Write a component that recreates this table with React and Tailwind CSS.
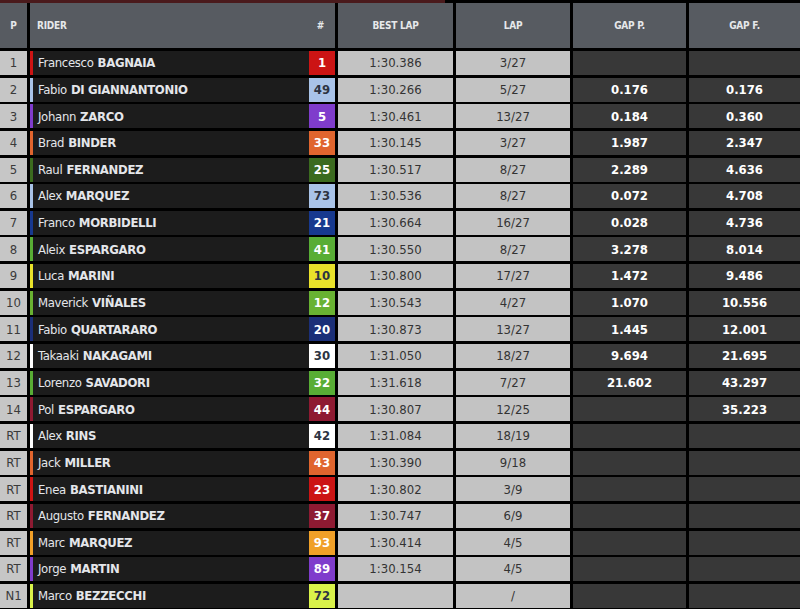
const rows = [
  { p: "1", first: "Francesco", last: "BAGNAIA", num: "1", color: "#cc1414", dark: false, best: "1:30.386", lap: "3/27", gp: "", gf: "" },
  { p: "2", first: "Fabio", last: "DI GIANNANTONIO", num: "49", color: "#a9c3e8", dark: true, best: "1:30.266", lap: "5/27", gp: "0.176", gf: "0.176" },
  { p: "3", first: "Johann", last: "ZARCO", num: "5", color: "#7f3ccc", dark: false, best: "1:30.461", lap: "13/27", gp: "0.184", gf: "0.360" },
  { p: "4", first: "Brad", last: "BINDER", num: "33", color: "#e0652e", dark: false, best: "1:30.145", lap: "3/27", gp: "1.987", gf: "2.347" },
  { p: "5", first: "Raul", last: "FERNANDEZ", num: "25", color: "#3b6b1f", dark: false, best: "1:30.517", lap: "8/27", gp: "2.289", gf: "4.636" },
  { p: "6", first: "Alex", last: "MARQUEZ", num: "73", color: "#a9c3e8", dark: true, best: "1:30.536", lap: "8/27", gp: "0.072", gf: "4.708" },
  { p: "7", first: "Franco", last: "MORBIDELLI", num: "21", color: "#17398f", dark: false, best: "1:30.664", lap: "16/27", gp: "0.028", gf: "4.736" },
  { p: "8", first: "Aleix", last: "ESPARGARO", num: "41", color: "#58ad35", dark: false, best: "1:30.550", lap: "8/27", gp: "3.278", gf: "8.014" },
  { p: "9", first: "Luca", last: "MARINI", num: "10", color: "#e9e22a", dark: true, best: "1:30.800", lap: "17/27", gp: "1.472", gf: "9.486" },
  { p: "10", first: "Maverick", last: "VIÑALES", num: "12", color: "#68b232", dark: false, best: "1:30.543", lap: "4/27", gp: "1.070", gf: "10.556" },
  { p: "11", first: "Fabio", last: "QUARTARARO", num: "20", color: "#1b2f78", dark: false, best: "1:30.873", lap: "13/27", gp: "1.445", gf: "12.001" },
  { p: "12", first: "Takaaki", last: "NAKAGAMI", num: "30", color: "#ffffff", dark: true, best: "1:31.050", lap: "18/27", gp: "9.694", gf: "21.695" },
  { p: "13", first: "Lorenzo", last: "SAVADORI", num: "32", color: "#58ad35", dark: false, best: "1:31.618", lap: "7/27", gp: "21.602", gf: "43.297" },
  { p: "14", first: "Pol", last: "ESPARGARO", num: "44", color: "#8e1a32", dark: false, best: "1:30.807", lap: "12/25", gp: "", gf: "35.223" },
  { p: "RT", first: "Alex", last: "RINS", num: "42", color: "#ffffff", dark: true, best: "1:31.084", lap: "18/19", gp: "", gf: "" },
  { p: "RT", first: "Jack", last: "MILLER", num: "43", color: "#e0652e", dark: false, best: "1:30.390", lap: "9/18", gp: "", gf: "" },
  { p: "RT", first: "Enea", last: "BASTIANINI", num: "23", color: "#cc1414", dark: false, best: "1:30.802", lap: "3/9", gp: "", gf: "" },
  { p: "RT", first: "Augusto", last: "FERNANDEZ", num: "37", color: "#8e1a32", dark: false, best: "1:30.747", lap: "6/9", gp: "", gf: "" },
  { p: "RT", first: "Marc", last: "MARQUEZ", num: "93", color: "#f0a028", dark: false, best: "1:30.414", lap: "4/5", gp: "", gf: "" },
  { p: "RT", first: "Jorge", last: "MARTIN", num: "89", color: "#7f3ccc", dark: false, best: "1:30.154", lap: "4/5", gp: "", gf: "" },
  { p: "N1", first: "Marco", last: "BEZZECCHI", num: "72", color: "#d9f24a", dark: true, best: "", lap: "/", gp: "", gf: "" },
];

const font = { fontFamily: '"Liberation Sans Narrow", "DejaVu Sans Condensed", "Roboto Condensed", Roboto, sans-serif' };

export default function App() {
  return (
    <div className="w-[800px] h-[609px] bg-black overflow-hidden flex flex-col" style={font}>
      <div className="h-[3px] flex shrink-0">
        <div className="w-[445px] bg-[#4a1a1c]"></div>
        <div className="flex-1 bg-black"></div>
      </div>
      <div className="h-[45px] flex gap-[3px] shrink-0 text-[10px] font-bold text-[#e6e8ea] tracking-tight">
        <div className="w-[27px] bg-[#575b61] flex items-center justify-center">P</div>
        <div className="w-[305px] bg-[#575b61] flex items-center justify-between pl-[7px] pr-[11px]">
          <span>RIDER</span>
          <span>#</span>
        </div>
        <div className="w-[115px] bg-[#575b61] flex items-center justify-center">BEST LAP</div>
        <div className="w-[114px] bg-[#575b61] flex items-center justify-center">LAP</div>
        <div className="w-[113px] bg-[#575b61] flex items-center justify-center">GAP P.</div>
        <div className="flex-1 bg-[#575b61] flex items-center justify-center">GAP F.</div>
      </div>
      <div className="flex flex-col gap-[2.65px] pt-[3px]">
        {rows.map((r, i) => (
          <div key={i} className="h-[24px] shrink-0 flex gap-[3px]">
            <div className="w-[27px] bg-[#c6c6c6] text-[#3a3a3a] text-[13px] flex items-center justify-center">{r.p}</div>
            <div className="w-[305px] bg-[#1c1c1c] flex items-stretch">
              <div className="w-[3px]" style={{ backgroundColor: r.color }}></div>
              <div className="flex-1 flex items-center pl-[5px] text-[13px] text-[#e4e6ea] tracking-tight">
                <span>{r.first}</span>
                <span className="font-bold ml-[4px]">{r.last}</span>
              </div>
              <div
                className={`w-[26px] flex items-center justify-center text-[13px] font-bold ${r.dark ? "text-[#2d3442]" : "text-white"}`}
                style={{ backgroundColor: r.color }}
              >
                {r.num}
              </div>
            </div>
            <div className="w-[115px] bg-[#c3c3c3] text-[#333] text-[13px] flex items-center justify-center">{r.best}</div>
            <div className="w-[114px] bg-[#c3c3c3] text-[#333] text-[13px] flex items-center justify-center">{r.lap}</div>
            <div className="w-[113px] bg-[#383838] text-white font-bold text-[13px] flex items-center justify-center">{r.gp}</div>
            <div className="flex-1 bg-[#383838] text-white font-bold text-[13px] flex items-center justify-center">{r.gf}</div>
          </div>
        ))}
      </div>
    </div>
  );
}
